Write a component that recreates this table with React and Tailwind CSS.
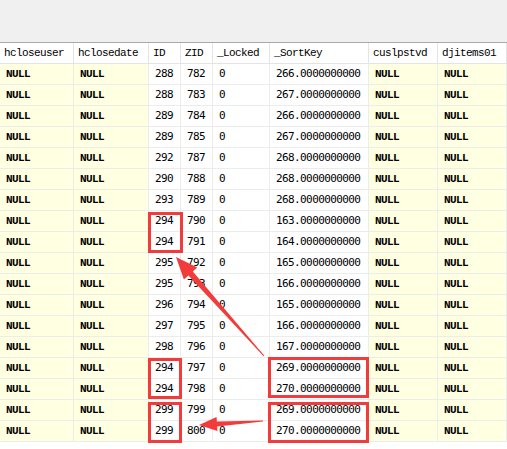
import React from 'react';

const columns = [
    { key: 'hcloseuser', width: 74 },
    { key: 'hclosedate', width: 75 },
    { key: 'ID', width: 32 },
    { key: 'ZID', width: 32 },
    { key: '_Locked', width: 57 },
    { key: '_SortKey', width: 99 },
    { key: 'cuslpstvd', width: 69 },
    { key: 'djitems01', width: 69 },
];

const rows = [
    [288, 782, 266], [288, 783, 267], [289, 784, 266], [289, 785, 267],
    [292, 787, 268], [290, 788, 268], [293, 789, 268], [294, 790, 163],
    [294, 791, 164], [295, 792, 165], [295, 793, 166], [296, 794, 165],
    [297, 795, 166], [298, 796, 167], [294, 797, 269], [294, 798, 270],
    [299, 799, 269], [299, 800, 270],
];

const mono = { fontFamily: '"Liberation Mono", "DejaVu Sans Mono", monospace' };
const sansMono = { fontFamily: '"DejaVu Sans Mono", "Liberation Mono", monospace' };

const NullCell = () => (
    <div className="h-[21px] bg-[#ffffe1] border-r border-b border-[#ececec] pl-[6px] flex items-center text-[11px] font-bold tracking-[-0.6px] text-black" style={mono}>
        NULL
    </div>
);

const NumCell = ({ children }) => (
    <div className="h-[21px] bg-white border-r border-b border-[#ececec] pl-[6px] flex items-center text-[11px] tracking-[-0.6px] text-black" style={sansMono}>
        {children}
    </div>
);

const App = () => {
    return (
        <div className="relative w-[507px] h-[449px] overflow-hidden bg-white">
            <div className="h-[43px] bg-[#f0f0f0] border-b border-[#a9a9a9]" />

            <div className="grid grid-cols-[74px_75px_32px_32px_57px_99px_69px_69px]">
                {columns.map(col => (
                    <div
                        key={col.key}
                        className="h-[21px] bg-white border-r border-b border-[#e4e4e4] pl-[4px] flex items-center text-[11px] tracking-[-0.6px] text-black whitespace-nowrap overflow-hidden"
                        style={mono}
                    >
                        {col.key}
                    </div>
                ))}

                {rows.map(([id, zid, sort]) => (
                    <React.Fragment key={zid}>
                        <NullCell />
                        <NullCell />
                        <NumCell>{id}</NumCell>
                        <NumCell>{zid}</NumCell>
                        <NumCell>0</NumCell>
                        <NumCell>{sort}.0000000000</NumCell>
                        <NullCell />
                        <NullCell />
                    </React.Fragment>
                ))}
            </div>

            {/* red annotation boxes */}
            <div className="absolute left-[148px] top-[212px] w-[35px] h-[41px] border-[3px] border-[#f23b3b]" />
            <div className="absolute left-[148px] top-[358px] w-[34px] h-[41px] border-[3px] border-[#f23b3b]" />
            <div className="absolute left-[148px] top-[402px] w-[34px] h-[41px] border-[3px] border-[#f23b3b]" />
            <div className="absolute left-[268px] top-[357px] w-[101px] h-[41px] border-[3px] border-[#f23b3b]" />
            <div className="absolute left-[268px] top-[402px] w-[101px] h-[41px] border-[3px] border-[#f23b3b]" />

            {/* arrows */}
            <svg className="absolute left-0 top-0" width="507" height="449" viewBox="0 0 507 449">
                <polygon
                    fill="#f23b3b"
                    points="264.4,355.7 192.8,271.4 197.3,267.4 176,257 183.9,279.4 188.4,275.4 263.6,356.3"
                />
                <polygon
                    fill="#f23b3b"
                    points="263.03,421.5 217.16,426.4 217.43,430.9 199,425 216.57,416.9 216.84,421.4 262.97,420.5"
                />
            </svg>
        </div>
    );
};

export default App;
